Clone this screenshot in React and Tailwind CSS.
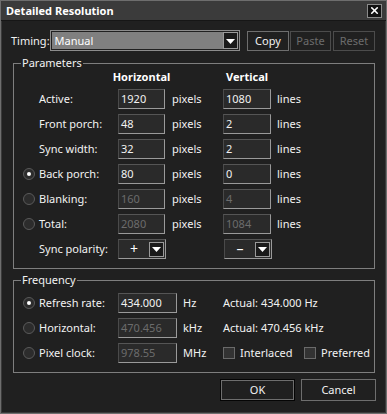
import { X } from 'lucide-react'

const font = { fontFamily: '"Noto Sans", "Liberation Sans", sans-serif' }

function Arrow() {
  return (
    <svg width="9" height="6" viewBox="0 0 9 6">
      <polygon points="0,1 9,1 4.5,6" fill="#ffffff" />
    </svg>
  )
}

function Radio({ checked, show }) {
  if (!show) return <div className="w-[16px] shrink-0" />
  return (
    <div className="w-[16px] shrink-0 flex items-center">
      <div className="w-[12px] h-[12px] rounded-full bg-[#2c2c2c] border border-[#5a5a5a] flex items-center justify-center">
        {checked && <div className="w-[4px] h-[4px] rounded-full bg-white" />}
      </div>
    </div>
  )
}

function Field({ value, disabled, w = 'w-[47px]' }) {
  return (
    <div
      className={`${w} h-[20px] shrink-0 bg-[#2a2a2a] border border-t-[#555555] border-l-[#4a4a4a] border-r-[#9a9a9a] border-b-[#9a9a9a] flex items-center pl-[2px] ${
        disabled ? 'text-[#6c6c6c]' : 'text-[#f2f2f2]'
      }`}
    >
      {value}
    </div>
  )
}

function Polarity({ sign }) {
  return (
    <div className="w-[48px] h-[20px] shrink-0 bg-[#2a2a2a] border border-t-[#555555] border-l-[#4a4a4a] border-r-[#9a9a9a] border-b-[#9a9a9a] flex items-center pr-[1px]">
      <span className="flex-1 text-center text-[14px] leading-none text-white">{sign}</span>
      <div className="w-[15px] h-[15px] bg-[#1a1a1a] border border-[#9a9a9a] flex items-center justify-center">
        <Arrow />
      </div>
    </div>
  )
}

function Group({ title, children, className }) {
  return (
    <div className={`relative border border-[#7e7e7e] ${className}`}>
      <span className="absolute -top-[9px] left-[7px] px-[1px] bg-[#202020] leading-[16px] text-[#f2f2f2]">
        {title}
      </span>
      {children}
    </div>
  )
}

const rows = [
  { label: 'Active:', h: '1920', v: '1080' },
  { label: 'Front porch:', h: '48', v: '2' },
  { label: 'Sync width:', h: '32', v: '2' },
  { label: 'Back porch:', h: '80', v: '0', radio: true, checked: true },
  { label: 'Blanking:', h: '160', v: '4', radio: true, disabled: true },
  { label: 'Total:', h: '2080', v: '1084', radio: true, disabled: true },
]

const freq = [
  { label: 'Refresh rate:', value: '434.000', unit: 'Hz', checked: true, actual: 'Actual: 434.000 Hz' },
  { label: 'Horizontal:', value: '470.456', unit: 'kHz', disabled: true, actual: 'Actual: 470.456 kHz' },
  { label: 'Pixel clock:', value: '978.55', unit: 'MHz', disabled: true },
]

export default function App() {
  return (
    <div
      className="w-[387px] h-[414px] bg-[#202020] border border-[#6e6e6e] flex flex-col text-[11px] text-[#f2f2f2] leading-[14px]"
      style={font}
    >
      {/* Title bar */}
      <div className="h-[20px] shrink-0 bg-[#3b3b3b] border-b border-[#161616] flex items-center justify-between pl-[5px] pr-[4px]">
        <span className="font-bold text-[11px] text-white">Detailed Resolution</span>
        <div className="w-[15px] h-[14px] bg-[#121212] border border-[#8a8a8a] flex items-center justify-center">
          <X className="w-[11px] h-[11px] text-white" strokeWidth={3.5} />
        </div>
      </div>

      <div className="flex-1 flex flex-col pl-[11px] pr-[10px] border-x border-b border-[#3a3a3a]">
        {/* Timing */}
        <div className="flex items-center mt-[9px] -ml-[2px] h-[21px]">
          <span className="w-[39px]">Timing:</span>
          <div className="w-[195px] h-[21px] border border-[#8c8c8c] p-[1px] flex">
            <div className="flex-1 bg-[#808080] flex items-center pl-[3px] text-white">Manual</div>
            <div className="w-[15px] bg-[#1a1a1a] border border-[#9a9a9a] flex items-center justify-center">
              <Arrow />
            </div>
          </div>
          <div className="flex ml-[7px] gap-[1px]">
            <button className="w-[42px] h-[20px] border border-[#6e6e6e] bg-[#202020] text-[#f2f2f2] text-[11px]">
              Copy
            </button>
            <button className="w-[41px] h-[20px] border border-[#4c4c4c] bg-[#202020] text-[#6c6c6c] text-[11px]">
              Paste
            </button>
            <button className="w-[42px] h-[20px] ml-[1px] border border-[#4c4c4c] bg-[#202020] text-[#6c6c6c] text-[11px]">
              Reset
            </button>
          </div>
        </div>

        {/* Parameters */}
        <Group title="Parameters" className="mt-[12px] pl-[9px] pt-[6px] pb-[9px] flex flex-col gap-[5px]">
          <div className="flex h-[14px] font-bold text-white">
            <div className="w-[95px] shrink-0" />
            <div className="w-[47px] shrink-0 flex justify-center whitespace-nowrap">Horizontal</div>
            <div className="w-[58px] shrink-0" />
            <div className="w-[48px] shrink-0 flex justify-center whitespace-nowrap">Vertical</div>
          </div>
          {rows.map((r) => (
            <div key={r.label} className="flex items-center h-[20px]">
              <Radio show={!!r.radio} checked={r.checked} />
              <span className="w-[79px] shrink-0">{r.label}</span>
              <Field value={r.h} disabled={r.disabled} />
              <span className="w-[58px] shrink-0 pl-[7px]">pixels</span>
              <Field value={r.v} disabled={r.disabled} w="w-[48px]" />
              <span className="pl-[6px]">lines</span>
            </div>
          ))}
          <div className="flex items-center h-[20px]">
            <Radio show={false} />
            <span className="w-[79px] shrink-0">Sync polarity:</span>
            <Polarity sign="+" />
            <div className="w-[58px] shrink-0" />
            <Polarity sign="–" />
          </div>
        </Group>

        {/* Frequency */}
        <Group title="Frequency" className="mt-[11px] pl-[9px] pt-[12px] pb-[9px] flex flex-col gap-[5px]">
          {freq.map((f) => (
            <div key={f.label} className="flex items-center h-[20px]">
              <Radio show checked={f.checked} />
              <span className="w-[79px] shrink-0">{f.label}</span>
              <Field value={f.value} disabled={f.disabled} w="w-[59px]" />
              <span className="w-[46px] shrink-0 pl-[6px]">{f.unit}</span>
              {f.actual ? (
                <span>{f.actual}</span>
              ) : (
                <div className="flex items-center">
                  <div className="w-[12px] h-[12px] bg-[#333333] border border-[#6a6a6a]" />
                  <span className="ml-[5px] w-[64px]">Interlaced</span>
                  <div className="w-[12px] h-[12px] bg-[#333333] border border-[#6a6a6a]" />
                  <span className="ml-[5px]">Preferred</span>
                </div>
              )}
            </div>
          ))}
        </Group>

        {/* Buttons */}
        <div className="flex justify-end gap-[6px] mt-[6px] -mr-[1px]">
          <button className="w-[75px] h-[22px] border border-[#050505] outline outline-1 -outline-offset-2 outline-[#6e6e6e] bg-[#202020] text-[11px] text-[#f2f2f2]">
            OK
          </button>
          <button className="w-[75px] h-[22px] border border-[#6e6e6e] bg-[#202020] text-[11px] text-[#f2f2f2]">
            Cancel
          </button>
        </div>
      </div>
    </div>
  )
}
